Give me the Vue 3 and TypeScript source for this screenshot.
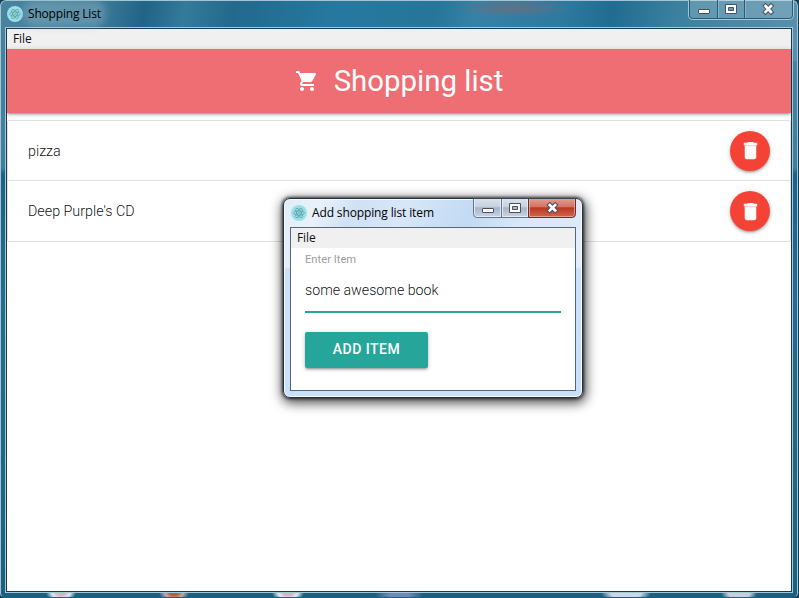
<script setup lang="ts">
import { ref } from 'vue'

interface ListItem {
  id: number
  name: string
}

const items = ref<ListItem[]>([
  { id: 1, name: 'pizza' },
  { id: 2, name: "Deep Purple's CD" },
])
const newItem = ref<string>('some awesome book')
let nextId = 3

function removeItem(id: number): void {
  items.value = items.value.filter((item) => item.id !== id)
}

function addItem(): void {
  const name = newItem.value.trim()
  if (!name) return
  items.value.push({ id: nextId++, name })
}
</script>

<template>
  <div class="desktop">
    <div class="window">
      <div class="titlebar">
        <svg class="app-icon" viewBox="0 0 16 16">
          <circle cx="8" cy="8" r="8" fill="#9adfe6" />
          <g fill="none" stroke="#4f919c" stroke-width=".6">
            <ellipse cx="8" cy="8" rx="5.3" ry="2.1" />
            <ellipse cx="8" cy="8" rx="5.3" ry="2.1" transform="rotate(60 8 8)" />
            <ellipse cx="8" cy="8" rx="5.3" ry="2.1" transform="rotate(120 8 8)" />
          </g>
          <circle cx="8" cy="8" r=".7" fill="#4a939e" />
        </svg>
        <span class="title main-title">Shopping List</span>
        <svg class="controls" width="106" height="21" viewBox="0 0 106 21">
          <path d="M.5 0V15.5Q.5 19.5 4.500 19.500H101.500Q105.500 19.500 105.500 15.500V0" fill="#ffffff2b" stroke="#a6c7d6" />
          <path d="M1.500 0V15.500Q1.500 18.500 4.500 18.500H101.500Q104.500 18.500 104.500 15.500V0M29.500 0V18M56.500 0V18" fill="none" stroke="#285a78" />
          <path d="M30.500 1V18M57.500 1V18" stroke="#8bb5c8" />
          <rect x="10.500" y="9.500" width="11" height="4" rx=".5" fill="#fff" stroke="#4c5063" />
          <path d="M37.500 4.500h11v9h-11zM40.500 7.500h5v3h-5z" fill="#fff" fill-rule="evenodd" stroke="#4c5063" />
          <path d="M77.500 6l5.500 6M83 6l-5.500 6" stroke="#4c5063" stroke-width="4.600" stroke-linecap="square" />
          <path d="M77.500 6l5.500 6M83 6l-5.500 6" stroke="#fff" stroke-width="2.600" stroke-linecap="square" />
        </svg>
      </div>

      <div class="client">
        <div class="menu"><span>File</span></div>
        <header class="nav">
          <svg class="cart" viewBox="0 0 24 24">
            <path fill="#fff" d="M7 18c-1.100 0-1.990.9-1.990 2S5.900 22 7 22s2-.9 2-2-.9-2-2-2zM1 2v2h2l3.600 7.590-1.350 2.450c-.16.280-.25.610-.25.960 0 1.100.9 2 2 2h12v-2H7.420c-.14 0-.25-.11-.25-.25l.03-.12.900-1.630h7.450c.75 0 1.410-.41 1.750-1.030l3.580-6.490c.08-.14.120-.31.120-.48 0-.55-.45-1-1-1H5.210l-.94-2H1zm16 16c-1.100 0-1.990.9-1.990 2s.89 2 1.990 2 2-.9 2-2-.9-2-2-2z" />
          </svg>
          <h1>Shopping list</h1>
        </header>
        <ul class="collection">
          <li v-for="item in items" :key="item.id">
            <span>{{ item.name }}</span>
            <button class="delete" aria-label="Delete" @click="removeItem(item.id)">
              <svg viewBox="0 0 24 24">
                <path fill="#fff" d="M6 19c0 1.100.9 2 2 2h8c1.100 0 2-.9 2-2V7.400H6z" />
                <path fill="#ffd5d2" d="M6 6.400h12v1.200H6z" />
                <path fill="#fff" d="M19 4h-3.500l-1-1h-5l-1 1H5v2.400h14z" />
              </svg>
            </button>
          </li>
        </ul>
      </div>
    </div>

    <div class="dialog">
      <div class="titlebar dialog-titlebar">
        <svg class="app-icon" viewBox="0 0 16 16">
          <circle cx="8" cy="8" r="8" fill="#9adfe6" />
          <g fill="none" stroke="#4f919c" stroke-width=".6">
            <ellipse cx="8" cy="8" rx="5.3" ry="2.1" />
            <ellipse cx="8" cy="8" rx="5.3" ry="2.1" transform="rotate(60 8 8)" />
            <ellipse cx="8" cy="8" rx="5.3" ry="2.1" transform="rotate(120 8 8)" />
          </g>
          <circle cx="8" cy="8" r=".7" fill="#4a939e" />
        </svg>
        <span class="title dialog-title">Add shopping list item</span>
        <svg class="controls" width="104" height="20" viewBox="0 0 104 20">
          <defs>
            <linearGradient id="glass" x2="0" y2="1">
              <stop offset="0" stop-color="#dbe4ee" />
              <stop offset=".46" stop-color="#c6d1df" />
              <stop offset=".5" stop-color="#a6b4c6" />
              <stop offset="1" stop-color="#c8d6e6" />
            </linearGradient>
            <linearGradient id="danger" x2="0" y2="1">
              <stop offset="0" stop-color="#e5a095" />
              <stop offset=".46" stop-color="#d37263" />
              <stop offset=".5" stop-color="#bb3520" />
              <stop offset="1" stop-color="#d06a50" />
            </linearGradient>
          </defs>
          <path d="M.5 0V15.500Q.5 19.500 3.500 19.500H55.500V0z" fill="url(#glass)" />
          <path d="M55.500 0V19.500H99.500Q102.500 19.500 102.500 15.500V0z" fill="url(#danger)" />
          <path d="M1.500 1V15.500Q1.500 18.500 3.500 18.500H27.500V1M29.500 1V18.500H54.500V1" fill="none" stroke="#edf3fa" stroke-opacity=".75" />
          <path d="M56.500 1V18.500H99.500Q101.500 18.500 101.500 15.500V1" fill="none" stroke="#f2b5a8" stroke-opacity=".7" />
          <path d="M.5 0V15.500Q.5 19.500 3.500 19.500H55.500M28.500 0V19" fill="none" stroke="#697587" />
          <path d="M55.500 0V19.500H99.500Q102.500 19.500 102.500 15.500V0" fill="none" stroke="#692b2c" />
          <path d="M0 .5H103" stroke="#3c4450" />
          <rect x="9.500" y="10.500" width="11" height="4" rx=".5" fill="#fff" stroke="#4c5063" />
          <path d="M36.500 5.500h11v9h-11zM39.500 8.500h5v3h-5z" fill="#fff" fill-rule="evenodd" stroke="#4c5063" />
          <path d="M76.700 7l5.500 5.500M82.200 7l-5.500 5.500" stroke="#4c5063" stroke-width="4.600" stroke-linecap="square" />
          <path d="M76.700 7l5.500 5.500M82.200 7l-5.500 5.500" stroke="#fff" stroke-width="2.600" stroke-linecap="square" />
        </svg>
      </div>
      <div class="dialog-client">
        <div class="menu"><span>File</span></div>
        <form @submit.prevent="addItem">
          <label for="item">Enter Item</label>
          <input id="item" v-model="newItem" type="text" autocomplete="off" spellcheck="false" />
          <button class="add" type="submit">Add Item</button>
        </form>
      </div>
    </div>
  </div>
</template>

<style>
body {
  margin: 0;
  overflow: hidden;
}
</style>

<style scoped>
* {
  box-sizing: border-box;
}
.desktop {
  position: relative;
  width: 799px;
  height: 598px;
  background: #123f58;
  overflow: hidden;
  font-family: Roboto, 'Liberation Sans', sans-serif;
}
.window {
  width: 798px;
  height: 598px;
  padding: 0 5px 5px;
  border: 1px solid #a3c4d0;
  border-bottom-color: #1b6082;
  border-radius: 6px 6px 5px 5px;
  background:
    radial-gradient(ellipse 58px 9px at 512px 7px, #5f7186 0, #5f718688 55%, transparent),
    radial-gradient(ellipse 15px 9px at 60px 592px, #d9b5b8 0 25%, #e4e6ef 60%, transparent),
    radial-gradient(ellipse 15px 9px at 173px 592px, #bb5a3c 0 25%, #c9a69f 60%, transparent),
    radial-gradient(ellipse 16px 9px at 287px 592px, #d9b5b8 0 25%, #e4e6ef 60%, transparent),
    radial-gradient(ellipse 24px 9px at 398px 594px, #7288b8 0 40%, transparent),
    radial-gradient(ellipse 25px 10px at 625px 592px, #ced8e5 0 60%, transparent),
    radial-gradient(ellipse 18px 10px at 738px 592px, #c9ced9 0 60%, transparent),
    linear-gradient(100deg, #4a839e 0, #3f7d9b 12%, #206488 18%, #347a9b 23%, #22698d 29%, #2778a0 42%, #27759a 54%, #3781a6 59%, #2e799f 70%, #216c91 76%, #3b809f 84%, #5991ad 100%) 0 0 / 100% 60px no-repeat,
    linear-gradient(#4a89a6 0, #3f7f9e 28%, #1d6286 29%, #246c8f 50%, #1b6082 100%);
}
.titlebar {
  display: flex;
  height: 27px;
}
.app-icon {
  width: 16px;
  height: 16px;
  flex: none;
  margin: 5px 0 0 1px;
}
.title {
  height: 17px;
  margin: 4px 0 0 5px;
  font: 12px/17px 'Open Sans', 'Noto Sans', sans-serif;
  color: #000;
  white-space: nowrap;
}
.main-title {
  letter-spacing: -0.18px;
  background: #8eb4c466;
  border-radius: 8px;
  box-shadow: 0 0 7px 5px #8eb4c466;
}
.controls {
  flex: none;
  margin-left: auto;
}
.window > .titlebar .controls {
  margin: -1px -2px 0 auto;
}
.client {
  height: 564px;
  border: 1px solid #193a50;
  outline: 1px solid #a5c9d8;
  background: #fff;
}
.menu {
  height: 20px;
  padding-left: 6px;
  background: #f0f0f0;
  color: #111;
  font: 12px/20px 'Open Sans', 'Noto Sans', sans-serif;
  letter-spacing: -0.1px;
}
.nav {
  display: flex;
  align-items: center;
  justify-content: center;
  height: 64px;
  background: #ee6e73;
  box-shadow: 0 2px 2px 0 rgba(0, 0, 0, 0.14), 0 3px 1px -2px rgba(0, 0, 0, 0.12), 0 1px 5px 0 rgba(0, 0, 0, 0.2);
  color: #fff;
}
.cart {
  width: 24px;
  height: 24px;
  margin-right: 15px;
}
h1 {
  margin: 0;
  font-size: 29.4px;
  font-weight: 400;
  line-height: 64px;
}
.collection {
  margin: 7px 0 0;
  padding: 0;
  list-style: none;
  border: 1px solid #e0e0e0;
  border-radius: 2px;
}
.collection li {
  display: flex;
  align-items: center;
  justify-content: space-between;
  height: 60px;
  padding: 0 20px;
  border-bottom: 1px solid #e0e0e0;
  color: rgba(0, 0, 0, 0.95);
  font-size: 14.3px;
  font-weight: 300;
}
.collection li:last-child {
  border-bottom: 0;
}
.delete {
  display: grid;
  place-items: center;
  width: 40px;
  height: 40px;
  padding: 0;
  border: 0;
  border-radius: 50%;
  background: #f44336;
  box-shadow: 0 2px 2px 0 rgba(0, 0, 0, 0.14), 0 3px 1px -2px rgba(0, 0, 0, 0.12), 0 1px 5px 0 rgba(0, 0, 0, 0.2);
}
.delete svg {
  width: 23px;
  height: 23px;
}
.dialog {
  position: absolute;
  left: 283px;
  top: 198px;
  width: 300px;
  height: 200px;
  padding: 0 5px 5px;
  border: 1px solid #24303b;
  border-radius: 7px;
  background: linear-gradient(115deg, #e1ecf7 0, #e9f2fb 12%, #cfe1f4 24%, #d7e7f8 40%, #c2daf3 62%, #d8e8fa 80%, #dceafa) 0 0 / 100% 30px no-repeat, linear-gradient(#e3eefa 0 68px, #cae1fa 70px, #c9e0fa);
  box-shadow: inset 0 0 0 1px #f4faff, 0 0 3px 1px rgba(0, 0, 0, 0.65), 1px 3px 12px 2px rgba(0, 0, 0, 0.7);
}
.dialog-titlebar {
  height: 28px;
}
.dialog-titlebar .app-icon {
  margin: 6px 0 0 2px;
}
.dialog-title {
  margin-top: 5px;
  letter-spacing: -0.13px;
}
.dialog-titlebar .controls {
  margin: -1px 0 0 auto;
}
.dialog-client {
  height: 164px;
  margin: 0 1px;
  border: 1px solid #56677c;
  background: #fff;
}
form {
  display: flex;
  flex-direction: column;
  align-items: flex-start;
  padding: 4px 14px 0;
}
label {
  height: 15px;
  color: #9e9e9e;
  font-size: 11.2px;
  line-height: 15px;
}
input {
  width: 256px;
  height: 46px;
  padding: 2px 0 0;
  border: 0;
  border-bottom: 2px solid #26a69a;
  outline: 0;
  background: transparent;
  color: rgba(0, 0, 0, 0.95);
  font: 300 14.2px Roboto, 'Liberation Sans', sans-serif;
}
.add {
  width: 123px;
  height: 36px;
  margin-top: 19px;
  padding: 0 0 2px;
  border: 0;
  border-radius: 2px;
  background: #26a69a;
  box-shadow: 0 2px 2px 0 rgba(0, 0, 0, 0.14), 0 3px 1px -2px rgba(0, 0, 0, 0.12), 0 1px 5px 0 rgba(0, 0, 0, 0.2);
  color: #fff;
  font: 500 14px/34px Roboto, 'Liberation Sans', sans-serif;
  letter-spacing: 0.5px;
  text-transform: uppercase;
}
</style>
